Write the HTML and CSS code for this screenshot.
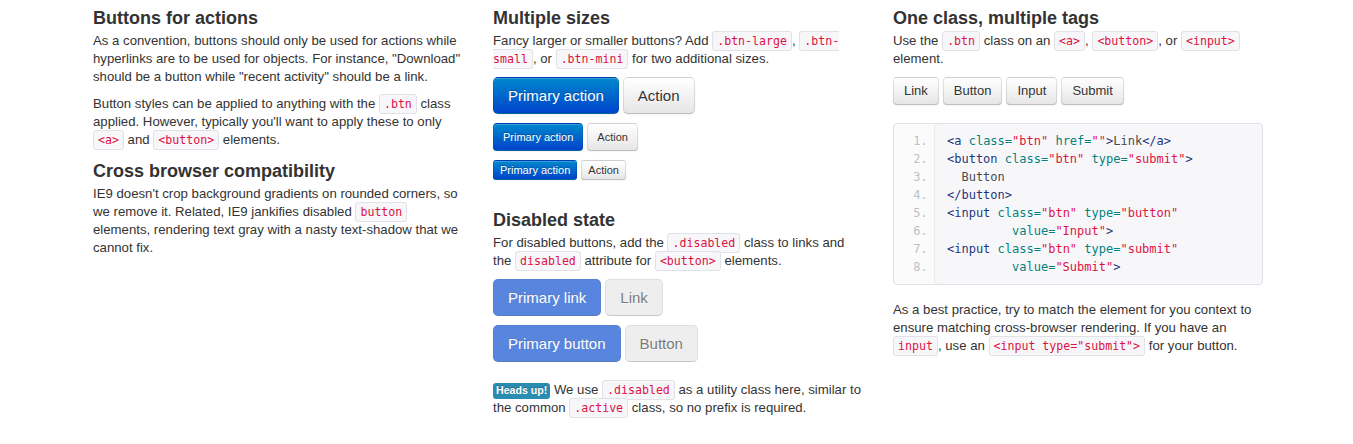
FILE: index.html
```html
<!DOCTYPE html>
<html>
<head>
<meta charset="utf-8">
<link rel="stylesheet" href="styles.css">
</head>
<body>
<div class="row">
  <div class="col">
    <h3>Buttons for actions</h3>
    <p>As a convention, buttons should only be used for actions while hyperlinks are to be used for objects. For instance, "Download" should be a button while "recent activity" should be a link.</p>
    <p>Button styles can be applied to anything with the <code>.btn</code> class applied. However, typically you'll want to apply these to only <code>&lt;a&gt;</code> and <code>&lt;button&gt;</code> elements.</p>
    <h3>Cross browser compatibility</h3>
    <p>IE9 doesn't crop background gradients on rounded corners, so we remove it. Related, IE9 jankifies disabled <code>button</code> elements, rendering text gray with a nasty text-shadow that we cannot fix.</p>
  </div>
  <div class="col">
    <h3>Multiple sizes</h3>
    <p>Fancy larger or smaller buttons? Add <code>.btn-large</code>, <code>.btn-small</code>, or <code>.btn-mini</code> for two additional sizes.</p>
    <div class="btn-row first">
      <button class="btn btn-large btn-primary">Primary action</button>
      <button class="btn btn-large">Action</button>
    </div>
    <div class="btn-row">
      <button class="btn btn-small btn-primary">Primary action</button>
      <button class="btn btn-small">Action</button>
    </div>
    <div class="btn-row">
      <button class="btn btn-mini btn-primary">Primary action</button>
      <button class="btn btn-mini">Action</button>
    </div>
    <h3 class="spaced">Disabled state</h3>
    <p>For disabled buttons, add the <code>.disabled</code> class to links and the <code>disabled</code> attribute for <code>&lt;button&gt;</code> elements.</p>
    <div class="btn-row first">
      <a class="btn btn-large btn-primary disabled">Primary link</a>
      <a class="btn btn-large disabled">Link</a>
    </div>
    <div class="btn-row last">
      <button class="btn btn-large btn-primary disabled">Primary button</button>
      <button class="btn btn-large disabled">Button</button>
    </div>
    <p class="note"><span class="label">Heads up!</span> We use <code>.disabled</code> as a utility class here, similar to the common <code>.active</code> class, so no prefix is required.</p>
  </div>
  <div class="col">
    <h3>One class, multiple tags</h3>
    <p>Use the <code>.btn</code> class on an <code>&lt;a&gt;</code>, <code>&lt;button&gt;</code>, or <code>&lt;input&gt;</code> element.</p>
    <div class="btn-row first form">
      <a class="btn">Link</a>
      <button class="btn">Button</button>
      <button class="btn">Input</button>
      <button class="btn">Submit</button>
    </div>
    <pre class="prettyprint"><ol class="linenums"><li><span class="tag">&lt;a</span> <span class="atn">class=</span><span class="atv">"btn"</span> <span class="atn">href=</span><span class="atv">""</span><span class="tag">&gt;</span><span class="pln">Link</span><span class="tag">&lt;/a&gt;</span></li><li><span class="tag">&lt;button</span> <span class="atn">class=</span><span class="atv">"btn"</span> <span class="atn">type=</span><span class="atv">"submit"</span><span class="tag">&gt;</span></li><li><span class="pln">  Button</span></li><li><span class="tag">&lt;/button&gt;</span></li><li><span class="tag">&lt;input</span> <span class="atn">class=</span><span class="atv">"btn"</span> <span class="atn">type=</span><span class="atv">"button"</span></li><li>         <span class="atn">value=</span><span class="atv">"Input"</span><span class="tag">&gt;</span></li><li><span class="tag">&lt;input</span> <span class="atn">class=</span><span class="atv">"btn"</span> <span class="atn">type=</span><span class="atv">"submit"</span></li><li>         <span class="atn">value=</span><span class="atv">"Submit"</span><span class="tag">&gt;</span></li></ol></pre>
    <p class="after-pre">As a best practice, try to match the element for you context to ensure matching cross-browser rendering. If you have an <code>input</code>, use an <code>&lt;input type="submit"&gt;</code> for your button.</p>
  </div>
</div>
</body>
</html>
```
FILE: styles.css
```css
html, body {
  margin: 0;
  padding: 0;
  background: #fff;
}
body {
  font-family: "Liberation Sans", Arial, sans-serif;
  font-size: 13.2px;
  line-height: 18px;
  color: #333;
}
.row {
  display: flex;
  gap: 30px;
  padding: 5px 0 0 93px;
}
.col {
  width: 370px;
  flex: none;
}
h3 {
  margin: 0;
  font-size: 18px;
  line-height: 27px;
  font-weight: bold;
  color: #333;
}
h3.spaced {
  margin-top: 27px;
}
p {
  margin: 0 0 9px;
}
code {
  font-family: "DejaVu Sans Mono", monospace;
  font-size: 11.6px;
  padding: 2px 4px;
  color: #d14;
  background-color: #f7f7f9;
  border: 1px solid #e1e1e8;
  border-radius: 3px;
}
.btn-row {
  display: flex;
  align-items: flex-start;
  gap: 4px;
  margin-bottom: 9px;
}
.btn-row.first {
  margin-top: 1px;
}
.btn-row.last {
  margin-bottom: 19px;
}
.btn-row.form {
  margin-bottom: 18px;
}
.btn {
  display: inline-block;
  box-sizing: border-box;
  padding: 4px 10px;
  margin: 0;
  font-family: "Liberation Sans", Arial, sans-serif;
  font-size: 13px;
  line-height: 18px;
  color: #333;
  text-align: center;
  text-decoration: none;
  text-shadow: 0 1px 1px rgba(255,255,255,0.75);
  background-color: #f5f5f5;
  background-image: linear-gradient(#ffffff, #e6e6e6);
  border: 1px solid #cccccc;
  border-color: rgba(0,0,0,0.1) rgba(0,0,0,0.1) rgba(0,0,0,0.25);
  border-radius: 4px;
  box-shadow: inset 0 1px 0 rgba(255,255,255,0.2), 0 1px 2px rgba(0,0,0,0.05);
  cursor: pointer;
}
.btn-large {
  padding: 9px 14px;
  font-size: 15px;
  line-height: 17px;
  border-radius: 5px;
}
.btn-small {
  padding: 5px 9px;
  font-size: 11px;
  line-height: 16px;
  border-radius: 4px;
}
.btn-mini {
  padding: 2px 6px;
  font-size: 11px;
  line-height: 14px;
  border-radius: 3px;
}
.btn-primary {
  color: #fff;
  text-shadow: 0 -1px 0 rgba(0,0,0,0.25);
  background-color: #0055cc;
  background-image: linear-gradient(#0088cc, #0044cc);
  border-color: rgba(0,0,0,0.1) rgba(0,0,0,0.1) rgba(0,0,0,0.25);
}
.btn.disabled {
  background-image: none;
  background-color: #e6e6e6;
  opacity: 0.65;
  box-shadow: none;
  cursor: default;
}
.btn-primary.disabled {
  background-color: #0044cc;
}
.label {
  display: inline-block;
  padding: 1px 3px 2px;
  font-size: 10.6px;
  line-height: 13px;
  font-weight: bold;
  color: #fff;
  background-color: #2b8cb1;
  border-radius: 3px;
  text-shadow: 0 -1px 0 rgba(0,0,0,0.25);
}
pre.prettyprint {
  margin: 0 0 16px;
  padding: 8px;
  font-family: "DejaVu Sans Mono", monospace;
  font-size: 12px;
  line-height: 18px;
  background-color: #f7f7f9;
  border: 1px solid #e1e1e8;
  border-radius: 4px;
  box-shadow: inset 40px 0 0 #fbfbfc, inset 41px 0 0 #ececf0;
  white-space: pre;
  color: #48484c;
}
ol.linenums {
  margin: 0 0 0 33px;
  padding: 0;
  list-style: decimal;
}
ol.linenums li {
  padding-left: 12px;
  color: #bebec5;
  line-height: 18px;
  text-shadow: 0 1px 0 #fff;
}
ol.linenums li::marker {
  font-family: "DejaVu Sans Mono", monospace;
}
.tag { color: #1e347b; }
.atn { color: #008080; }
.atv { color: #dd1144; }
.pln { color: #48484c; }
```
